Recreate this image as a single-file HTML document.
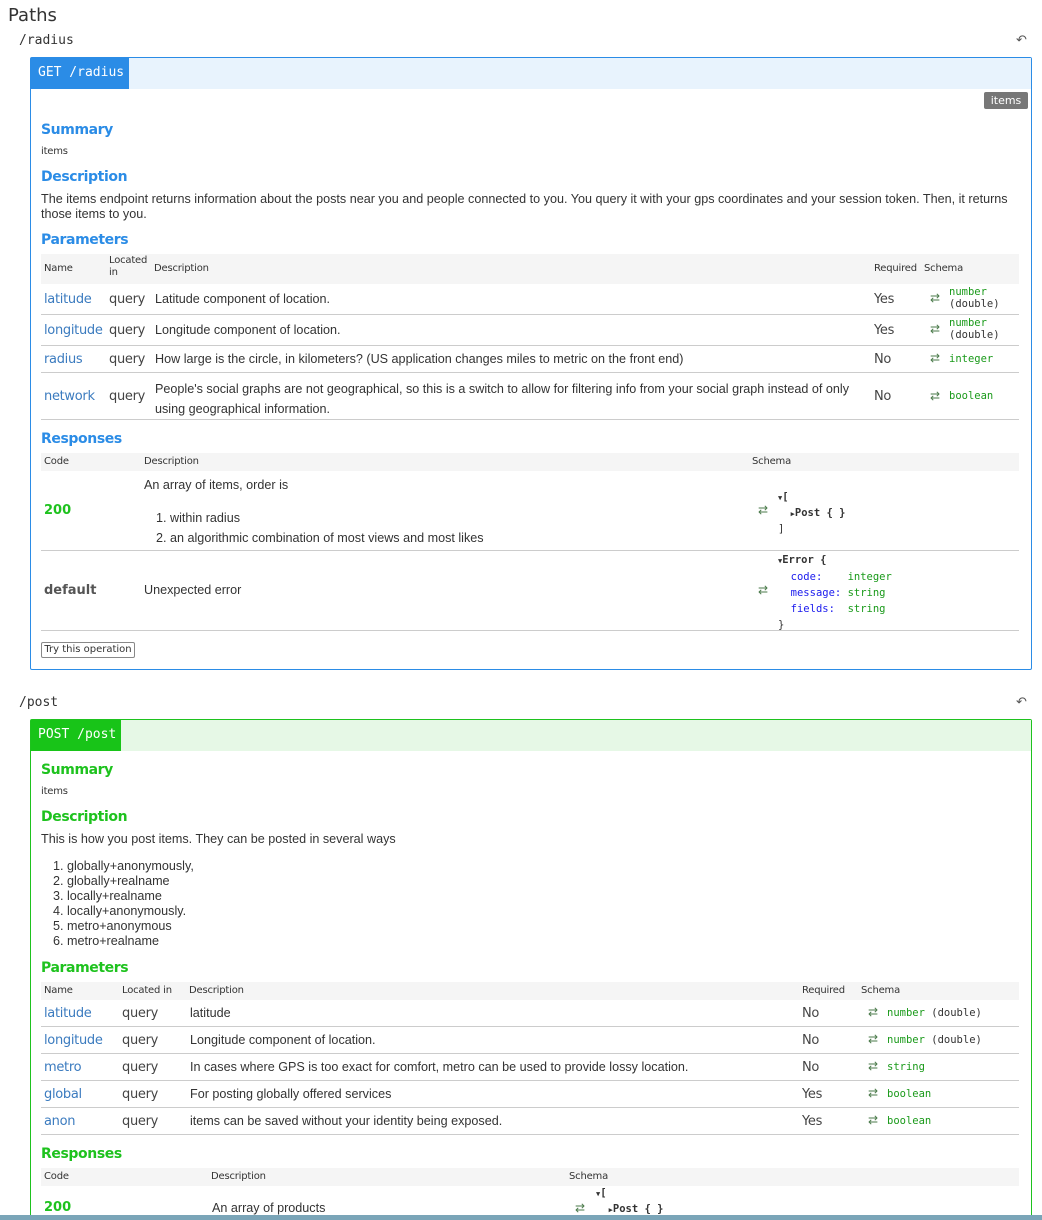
<!DOCTYPE html>
<html><head><meta charset="utf-8"><style>
*{margin:0;padding:0;box-sizing:border-box}
html,body{width:1042px;height:1220px;overflow:hidden}
body{background:#fff;position:relative;font-family:"Liberation Sans",sans-serif;color:#333}
#w{position:absolute;left:0;top:2px;width:1042px;height:1218px}
.t{position:absolute;white-space:nowrap;line-height:16px}
.h{font-family:"DejaVu Sans",sans-serif;font-size:14px;font-weight:bold;letter-spacing:-0.4px}
.bl{color:#2b8ce6}.gr{color:#1ec21e}
.sm{font-family:"DejaVu Sans",sans-serif;font-size:10px;color:#333;letter-spacing:-0.2px}
.nm{font-family:"DejaVu Sans",sans-serif;font-size:13px;color:#3b7bbf;letter-spacing:-0.3px}
.q{font-family:"DejaVu Sans",sans-serif;font-size:13px;color:#444;letter-spacing:-0.3px}
.d{font-size:12.6px;color:#333}
.mono{font-family:"DejaVu Sans Mono",monospace;font-size:10.5px}
.ty{color:#1a9a1a}
.ic{font-size:12px;color:#4a7a4a;position:absolute}
.row{position:absolute;left:41px;width:978px;border-bottom:1px solid #ccc}
.hd{position:absolute;left:41px;width:978px;background:#f5f5f5}
.box{position:absolute;left:30px;width:1002px}
</style></head><body><div id="w">
<div class="t" style="left:8px;top:3px;font-family:'DejaVu Sans',sans-serif;font-size:18px;line-height:22px;color:#333">Paths</div>
<div class="t mono" style="left:19px;top:31px;font-size:13px;color:#333">/radius</div>
<div class="t" style="left:1016px;top:30px;font-size:13px;color:#555">&#x21B6;</div>

<div class="box" style="top:55px;height:613px;border:1px solid #2b8ce6;border-radius:2px"></div>
<div style="position:absolute;left:31px;top:56px;width:1000px;height:31px;background:#e8f3fd"></div>
<div style="position:absolute;left:31px;top:56px;width:98px;height:31px;background:#2b8ce6"></div>
<div class="t mono" style="left:38px;top:63px;font-size:13px;color:#fff">GET /radius</div>
<div style="position:absolute;left:984px;top:90px;width:44px;height:17px;background:#777;border-radius:2px;color:#fff;font-family:'DejaVu Sans',sans-serif;font-size:11px;text-align:center;line-height:17px">items</div>

<div class="t h bl" style="left:41px;top:120px">Summary</div>
<div class="t sm" style="left:41px;top:142px">items</div>
<div class="t h bl" style="left:41px;top:167px">Description</div>
<div class="t d" style="left:41px;top:189px">The items endpoint returns information about the posts near you and people connected to you. You query it with your gps coordinates and your session token. Then, it returns</div>
<div class="t d" style="left:41px;top:204px">those items to you.</div>
<div class="t h bl" style="left:41px;top:230px">Parameters</div>

<div class="hd" style="top:252px;height:30px"></div>
<div class="t sm" style="left:44px;top:259px">Name</div>
<div class="t sm" style="left:109px;top:253px;line-height:12px">Located<br>in</div>
<div class="t sm" style="left:154px;top:259px">Description</div>
<div class="t sm" style="left:874px;top:259px">Required</div>
<div class="t sm" style="left:924px;top:259px">Schema</div>

<div class="row" style="top:282px;height:31px"></div>
<div class="t nm" style="left:44px;top:290px">latitude</div><div class="t q" style="left:109px;top:290px">query</div><div class="t d" style="left:155px;top:289px">Latitude component of location.</div><div class="t q" style="left:874px;top:290px">Yes</div><div class="ic" style="left:930px;top:289px">⇄</div><div class="t mono ty" style="left:949px;top:284px;line-height:12px">number<br><span style="color:#333">(double)</span></div>

<div class="row" style="top:313px;height:31px"></div>
<div class="t nm" style="left:44px;top:321px">longitude</div><div class="t q" style="left:109px;top:321px">query</div><div class="t d" style="left:155px;top:320px">Longitude component of location.</div><div class="t q" style="left:874px;top:321px">Yes</div><div class="ic" style="left:930px;top:320px">⇄</div><div class="t mono ty" style="left:949px;top:315px;line-height:12px">number<br><span style="color:#333">(double)</span></div>

<div class="row" style="top:344px;height:27px"></div>
<div class="t nm" style="left:44px;top:350px">radius</div><div class="t q" style="left:109px;top:350px">query</div><div class="t d" style="left:155px;top:349px">How large is the circle, in kilometers? (US application changes miles to metric on the front end)</div><div class="t q" style="left:874px;top:350px">No</div><div class="ic" style="left:930px;top:349px">⇄</div><div class="t mono ty" style="left:949px;top:349px">integer</div>

<div class="row" style="top:371px;height:47px"></div>
<div class="t nm" style="left:44px;top:387px">network</div><div class="t q" style="left:109px;top:387px">query</div><div class="t d" style="left:155px;top:377px;line-height:20px">People's social graphs are not geographical, so this is a switch to allow for filtering info from your social graph instead of only<br>using geographical information.</div><div class="t q" style="left:874px;top:387px">No</div><div class="ic" style="left:930px;top:387px">⇄</div><div class="t mono ty" style="left:949px;top:386px">boolean</div>

<div class="t h bl" style="left:41px;top:429px">Responses</div>
<div class="hd" style="top:451px;height:18px"></div>
<div class="t sm" style="left:44px;top:452px">Code</div>
<div class="t sm" style="left:144px;top:452px">Description</div>
<div class="t sm" style="left:752px;top:452px">Schema</div>

<div class="row" style="top:469px;height:80px"></div>
<div class="t" style="left:44px;top:501px;font-family:'DejaVu Sans',sans-serif;font-weight:bold;font-size:13px;color:#1ec21e">200</div>
<div class="t d" style="left:144px;top:475px">An array of items, order is</div>
<div class="t d" style="left:156px;top:508px">1. within radius</div>
<div class="t d" style="left:156px;top:528px">2. an algorithmic combination of most views and most likes</div>
<div class="ic" style="left:758px;top:501px">⇄</div>
<div class="t mono" style="left:778px;top:488px;line-height:15px;color:#333"><b><span style="font-size:7px">▼</span>[</b><br>&nbsp;&nbsp;<b><span style="font-size:7px">▶</span>Post { }</b><br>]</div>

<div class="row" style="top:549px;height:80px"></div>
<div class="t" style="left:44px;top:581px;font-family:'DejaVu Sans',sans-serif;font-weight:bold;font-size:13px;color:#555">default</div>
<div class="t d" style="left:144px;top:580px">Unexpected error</div>
<div class="ic" style="left:758px;top:581px">⇄</div>
<div class="t mono" style="left:778px;top:550px;line-height:16px;color:#333"><b><span style="font-size:7px">▼</span>Error {</b><br>&nbsp;&nbsp;<span style="color:#1a1aee">code:</span>&nbsp;&nbsp;&nbsp;&nbsp;<span class="ty">integer</span><br>&nbsp;&nbsp;<span style="color:#1a1aee">message:</span> <span class="ty">string</span><br>&nbsp;&nbsp;<span style="color:#1a1aee">fields:</span>&nbsp;&nbsp;<span class="ty">string</span><br>}</div>

<div style="position:absolute;left:41px;top:640px;width:94px;height:16px;border:1px solid #888;border-radius:2px;font-family:'DejaVu Sans',sans-serif;font-size:10px;line-height:14px;text-align:center;color:#333">Try this operation</div>

<!-- POST -->
<div class="t mono" style="left:19px;top:693px;font-size:13px;color:#333">/post</div>
<div class="t" style="left:1016px;top:692px;font-size:13px;color:#555">&#x21B6;</div>
<div class="box" style="top:717px;height:520px;border:1px solid #1ec21e;border-radius:2px"></div>
<div style="position:absolute;left:31px;top:718px;width:1000px;height:31px;background:#e6f8e6"></div>
<div style="position:absolute;left:31px;top:718px;width:90px;height:31px;background:#18c418"></div>
<div class="t mono" style="left:38px;top:725px;font-size:13px;color:#fff">POST /post</div>

<div class="t h gr" style="left:41px;top:760px">Summary</div>
<div class="t sm" style="left:41px;top:782px">items</div>
<div class="t h gr" style="left:41px;top:807px">Description</div>
<div class="t d" style="left:41px;top:829px">This is how you post items. They can be posted in several ways</div>
<div class="t d" style="left:53px;top:857px;line-height:15px">1. globally+anonymously,<br>2. globally+realname<br>3. locally+realname<br>4. locally+anonymously.<br>5. metro+anonymous<br>6. metro+realname</div>
<div class="t h gr" style="left:41px;top:958px">Parameters</div>

<div class="hd" style="top:980px;height:18px"></div>
<div class="t sm" style="left:44px;top:981px">Name</div>
<div class="t sm" style="left:122px;top:981px">Located in</div>
<div class="t sm" style="left:189px;top:981px">Description</div>
<div class="t sm" style="left:802px;top:981px">Required</div>
<div class="t sm" style="left:861px;top:981px">Schema</div>

<div class="row" style="top:998px;height:27px"></div>
<div class="t nm" style="left:44px;top:1004px">latitude</div><div class="t q" style="left:122px;top:1004px">query</div><div class="t d" style="left:190px;top:1003px">latitude</div><div class="t q" style="left:802px;top:1004px">No</div><div class="ic" style="left:868px;top:1003px">⇄</div><div class="t mono ty" style="left:887px;top:1003px">number <span style="color:#333">(double)</span></div>

<div class="row" style="top:1025px;height:27px"></div>
<div class="t nm" style="left:44px;top:1031px">longitude</div><div class="t q" style="left:122px;top:1031px">query</div><div class="t d" style="left:190px;top:1030px">Longitude component of location.</div><div class="t q" style="left:802px;top:1031px">No</div><div class="ic" style="left:868px;top:1030px">⇄</div><div class="t mono ty" style="left:887px;top:1030px">number <span style="color:#333">(double)</span></div>

<div class="row" style="top:1052px;height:27px"></div>
<div class="t nm" style="left:44px;top:1058px">metro</div><div class="t q" style="left:122px;top:1058px">query</div><div class="t d" style="left:190px;top:1057px">In cases where GPS is too exact for comfort, metro can be used to provide lossy location.</div><div class="t q" style="left:802px;top:1058px">No</div><div class="ic" style="left:868px;top:1057px">⇄</div><div class="t mono ty" style="left:887px;top:1057px">string</div>

<div class="row" style="top:1079px;height:27px"></div>
<div class="t nm" style="left:44px;top:1085px">global</div><div class="t q" style="left:122px;top:1085px">query</div><div class="t d" style="left:190px;top:1084px">For posting globally offered services</div><div class="t q" style="left:802px;top:1085px">Yes</div><div class="ic" style="left:868px;top:1084px">⇄</div><div class="t mono ty" style="left:887px;top:1084px">boolean</div>

<div class="row" style="top:1106px;height:27px"></div>
<div class="t nm" style="left:44px;top:1112px">anon</div><div class="t q" style="left:122px;top:1112px">query</div><div class="t d" style="left:190px;top:1111px">items can be saved without your identity being exposed.</div><div class="t q" style="left:802px;top:1112px">Yes</div><div class="ic" style="left:868px;top:1111px">⇄</div><div class="t mono ty" style="left:887px;top:1111px">boolean</div>

<div class="t h gr" style="left:41px;top:1144px">Responses</div>
<div class="hd" style="top:1166px;height:18px"></div>
<div class="t sm" style="left:44px;top:1167px">Code</div>
<div class="t sm" style="left:211px;top:1167px">Description</div>
<div class="t sm" style="left:569px;top:1167px">Schema</div>
<div class="t" style="left:44px;top:1198px;font-family:'DejaVu Sans',sans-serif;font-weight:bold;font-size:13px;color:#1ec21e">200</div>
<div class="t d" style="left:212px;top:1198px">An array of products</div>
<div class="ic" style="left:575px;top:1199px">⇄</div>
<div class="t mono" style="left:596px;top:1184px;line-height:15px;color:#333"><b><span style="font-size:7px">▼</span>[</b><br>&nbsp;&nbsp;<b><span style="font-size:7px">▶</span>Post { }</b></div>
</div>
<div style="position:absolute;left:0;top:1215px;width:1042px;height:5px;background:#7aa5b8"></div>
</body></html>
